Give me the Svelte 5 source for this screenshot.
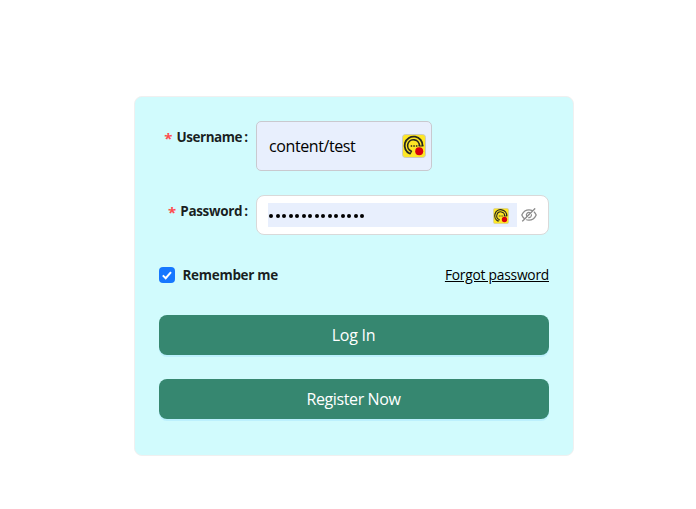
<script>
  let remember = $state(true);
  const dots = Array.from({ length: 15 }, (_, i) => i);
</script>

{#snippet badge()}
  <svg class="badge" viewBox="0 0 24 24" aria-hidden="true">
    <rect x=".5" y=".5" width="23" height="23" rx="3" fill="#fee725" stroke="#cbc9bd" />
    <path d="M8 19.8A9 9 0 1 1 20.6 12" fill="none" stroke="#29291f" stroke-width="1.8" />
    <path d="M9.4 17.2A5.9 5.9 0 1 1 17.4 12" fill="none" stroke="#29291f" stroke-width="1.6" />
    <path d="M8 20.2l1.8-3.4M16.6 12h4.8" stroke="#29291f" stroke-width="1.2" />
    <path d="M8.7 12h1.5M11.3 12h1.5M13.9 12h1.5" stroke="#29291f" stroke-width="1.5" />
    <circle cx="17.2" cy="17.3" r="4" fill="#d7000b" />
  </svg>
{/snippet}

<main>
  <form class="card" onsubmit={(e) => e.preventDefault()}>
    <div class="row">
      <div class="label"><span class="star">*</span><b class="user">Username</b><b class="colon">:</b></div>
      <div class="username"><span class="value">content/test</span>{@render badge()}</div>
    </div>
    <div class="row second">
      <div class="label"><span class="star">*</span><b class="pass">Password</b><b class="colon">:</b></div>
      <div class="password">
        <div class="fill">
          <span class="dots">{#each dots as dot (dot)}<i></i>{/each}</span>
          {@render badge()}
        </div>
        <svg class="eye" viewBox="64 64 896 896" aria-hidden="true">
          <path d="M942.2 486.2Q889.47 375.11 816.7 305l-50.88 50.88C807.31 395.53 843.45 447.4 874.7 512 791.5 684.2 673.4 766 512 766q-72.67 0-133.87-22.38L323 798.75Q408 838 512 838q288.3 0 430.2-300.3a60.29 60.29 0 000-51.5zm-63.57-320.64L836 122.88a8 8 0 00-11.32 0L715.31 232.2Q624.86 186 512 186q-288.3 0-430.2 300.3a60.3 60.3 0 000 51.5q56.69 119.4 136.5 191.41L112.48 835a8 8 0 000 11.31L155.17 889a8 8 0 0011.31 0l712.15-712.12a8 8 0 000-11.32zM149.3 512C232.6 339.8 350.7 258 512 258c54.54 0 104.13 9.36 149.12 28.39l-70.3 70.3a176 176 0 00-238.13 238.13l-83.42 83.42C223.1 637.49 183.3 582.28 149.3 512zm246.7 0a112.11 112.11 0 01146.2-106.69L401.31 546.2A112 112 0 01396 512z" />
          <path d="M508 624c-3.46 0-6.87-.16-10.25-.47l-52.82 52.82a176.09 176.09 0 00227.42-227.42l-52.82 52.82c.31 3.38.47 6.79.47 10.25a111.94 111.94 0 01-112 112z" />
        </svg>
      </div>
    </div>
    <div class="options">
      <button type="button" class="remember" onclick={() => (remember = !remember)}>
        <span class="box" class:on={remember}>
          <svg viewBox="0 0 16 16" aria-hidden="true"><path d="M3.8 8.4l2.9 2.8 5.3-6" /></svg>
        </span>
        <b>Remember me</b>
      </button>
      <span class="forgot">Forgot password</span>
    </div>
    <button class="action"><span class="login">Log In</span></button>
    <button type="button" class="action"><span class="register">Register Now</span></button>
  </form>
</main>

<style>
  :global(body) {
    background: #fff;
  }
  main {
    padding: 96px 0 0 134px;
    font: 14px/22px "Open Sans", "Noto Sans", sans-serif;
    color: rgba(0, 0, 0, 0.88);
  }
  .card {
    box-sizing: border-box;
    width: 440px;
    height: 360px;
    padding: 24px;
    border: 1px solid #f0f0f0;
    border-radius: 8px;
    background: #d1fbfd;
  }
  .row {
    display: flex;
    align-items: flex-start;
  }
  .second {
    margin-top: 24px;
  }
  .label {
    display: flex;
    align-items: center;
    justify-content: flex-end;
    width: 97px;
    height: 32px;
    padding: 0 8px 0 0;
    box-sizing: border-box;
    font-size: 13.5px;
  }
  .star {
    margin: 2px 4px 0 0;
    color: #ff4d4f;
    font: bold 15px/14px "Open Sans", sans-serif;
  }
  .colon {
    margin-left: 2px;
  }
  .user {
    letter-spacing: -0.44px;
  }
  .pass {
    letter-spacing: -0.35px;
  }
  .username {
    display: flex;
    align-items: center;
    justify-content: space-between;
    box-sizing: border-box;
    width: 176px;
    height: 50px;
    padding: 0 5px 0 12px;
    border: 1px solid #c9c9cf;
    border-radius: 5px;
    background: #e8effd;
    color: #000;
    font-size: 16px;
  }
  .value {
    letter-spacing: -0.4px;
  }
  .badge {
    display: block;
    width: 24px;
    height: 24px;
  }
  .password {
    display: flex;
    align-items: center;
    justify-content: space-between;
    box-sizing: border-box;
    width: 293px;
    height: 40px;
    padding: 0 11px;
    border: 1px solid #d9d9d9;
    border-radius: 8px;
    background: #fff;
  }
  .fill {
    display: flex;
    align-items: center;
    justify-content: space-between;
    box-sizing: border-box;
    width: 249px;
    height: 24px;
    padding: 0 8px 0 1px;
    background: #e8effd;
  }
  .fill .badge {
    width: 16px;
    height: 16px;
    margin-top: 2px;
  }
  .dots {
    display: flex;
    gap: 2.5px;
    margin-top: 2px;
  }
  .dots i {
    width: 4px;
    height: 4px;
    border-radius: 50%;
    background: #000;
  }
  .eye {
    width: 16px;
    height: 16px;
    fill: #8c8c8c;
  }
  .options {
    display: flex;
    align-items: center;
    justify-content: space-between;
    height: 32px;
    margin-top: 24px;
  }
  button {
    border: 0;
    font: inherit;
    cursor: pointer;
  }
  .remember {
    display: flex;
    align-items: center;
    gap: 7.5px;
    padding: 0;
    background: none;
    color: inherit;
    font-size: 13.5px;
    letter-spacing: -0.3px;
  }
  .box {
    display: block;
    width: 16px;
    height: 16px;
    border-radius: 4px;
    background: #fff;
  }
  .box.on {
    background: #1677ff;
  }
  .box svg {
    display: block;
    fill: none;
    stroke: #fff;
    stroke-width: 2;
  }
  .forgot {
    color: #000;
    font-size: 13.8px;
    letter-spacing: -0.24px;
    text-decoration: underline;
  }
  .action {
    display: flex;
    align-items: center;
    justify-content: center;
    width: 390px;
    height: 40px;
    margin-top: 24px;
    padding: 0;
    border-radius: 8px;
    background: #368770;
    box-shadow: 0 2px 0 rgba(5, 145, 255, 0.1);
    color: #fff;
    font-size: 16px;
  }
  .login {
    padding-right: 1px;
    letter-spacing: -0.25px;
  }
  .register {
    padding-right: 1px;
    letter-spacing: -0.38px;
  }
</style>
